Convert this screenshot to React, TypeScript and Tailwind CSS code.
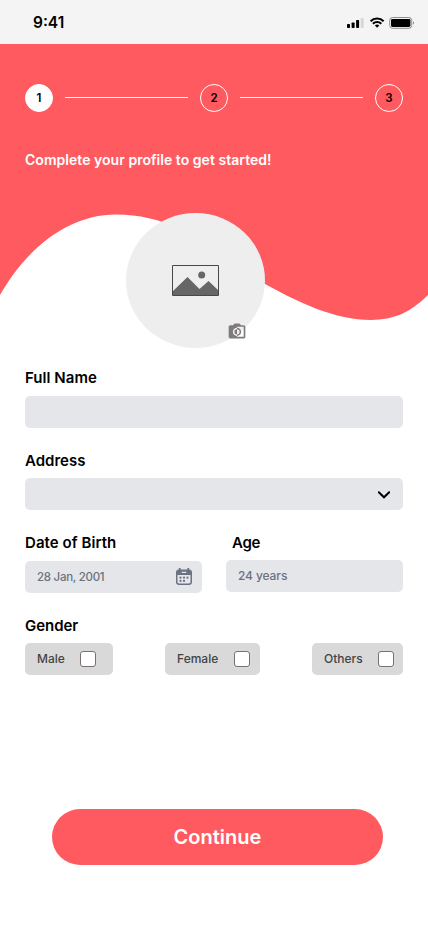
import React from "react";

const labelClass = "block h-5 text-[15px] leading-5 font-semibold text-black whitespace-nowrap";

function StatusBar() {
  return (
    <div className="flex h-11 items-center justify-between bg-[#f4f4f4] pr-[13px] pl-[33px]">
      <span className="mt-0.5 text-[15.5px] leading-5 font-semibold text-black">9:41</span>
      <svg width="68" height="14" viewBox="0 0 68 14" className="mt-0.5">
        <rect x="0" y="8" width="3" height="4" rx=".7" />
        <rect x="4.6" y="6.5" width="3" height="5.5" rx=".7" />
        <rect x="9.1" y="4" width="3" height="8" rx=".7" />
        <rect x="13.7" y="2" width="3" height="10" rx=".7" fill="#d7d7d7" />
        <g fill="none" stroke="#000" strokeWidth="2.1">
          <path d="M23.6 5.2a9.2 9.2 0 0 1 13 0" />
          <path d="M25.9 7.8a5.9 5.9 0 0 1 8.4 0" />
        </g>
        <path d="M27.9 9.6a3.3 3.3 0 0 1 4.4 0L30.1 11.8z" />
        <rect x="42.7" y="1.5" width="22" height="10.8" rx="2.8" fill="none" stroke="#8e8e8e" />
        <rect x="44" y="2.9" width="19.4" height="8" rx="1.3" />
        <path d="M66 5.2c1.4.6 1.4 2.8 0 3.4z" fill="#8e8e8e" />
      </svg>
    </div>
  );
}

function Step({ n, active = false }: { n: number; active?: boolean }) {
  return (
    <span
      className={`flex size-7 items-center justify-center rounded-full border border-white text-[11.5px] leading-4 font-semibold text-black ${
        active ? "bg-white" : ""
      }`}
    >
      {n}
    </span>
  );
}

function Steps() {
  return (
    <div className="flex items-center justify-between">
      <Step n={1} active />
      <span className="-mt-px h-px w-[123px] bg-white" />
      <Step n={2} />
      <span className="-mt-px h-px w-[123px] bg-white" />
      <Step n={3} />
    </div>
  );
}

function Wave() {
  return (
    <svg className="absolute top-0 left-0" width="428" height="277" viewBox="0 44 428 277">
      <path
        d="M0 44H428V295C411 312 394 320 371 320C335 320 300 303 265 284C232 266 188 214.500 116 214.500C70 214.500 28 246 0 295Z"
        fill="#ff5a60"
      />
    </svg>
  );
}

function Avatar() {
  return (
    <div className="relative ml-[101px] flex h-[135px] w-[139px] items-center justify-center rounded-[50%] bg-[#eeeeee]">
      <svg width="47" height="31" viewBox="0 0 47 31">
        <path d="M1 26 15.5 12 27.5 24 36.5 16 46 25V30.500H1z" fill="#666" />
        <circle cx="29.700" cy="10" r="3.500" fill="#666" />
        <path d="M.5.500h46v30H.5z" fill="none" stroke="#484848" />
      </svg>
      <svg className="absolute top-[107.5px] left-[101px]" width="20" height="20" viewBox="0 0 24 24" fill="#817a7a">
        <path d="M20 5h-3.200L15 3H9L7.200 5H4c-1.100 0-2 .9-2 2v12c0 1.100.9 2 2 2h16c1.100 0 2-.9 2-2V7c0-1.100-.9-2-2-2zm0 14h-8v-1c-2.800 0-5-2.200-5-5s2.200-5 5-5V7h8v12zm-3-6c0-2.800-2.200-5-5-5v1.800c1.800 0 3.200 1.400 3.200 3.200s-1.400 3.200-3.200 3.200V18c2.800 0 5-2.200 5-5zm-8.200 0c0 1.800 1.400 3.200 3.200 3.200V9.800c-1.800 0-3.200 1.400-3.200 3.200z" />
      </svg>
    </div>
  );
}

function CalendarIcon() {
  return (
    <svg width="16" height="17" viewBox="0 0 16 17" className="-mt-px">
      <path
        fillRule="evenodd"
        fill="#6b7280"
        d="M2.800 0h1.800v1.500h6.800V0h1.800v1.500C15 1.500 16 2.700 16 4.300V14c0 1.800-1.100 3-3 3H3c-1.900 0-3-1.200-3-3V4.300C0 2.700 1 1.500 2.800 1.500zM5.800 3.700v1.300h4.400V3.700zM1.500 7v6.800c0 1.100.6 1.700 1.700 1.700h9.600c1.100 0 1.700-.6 1.700-1.700V7z"
      />
      <g fill="#6b7280">
        <circle cx="4.500" cy="9.700" r="1.100" />
        <circle cx="8" cy="9.700" r="1.100" />
        <circle cx="11.500" cy="9.700" r="1.100" />
        <circle cx="4.500" cy="12.900" r="1.100" />
        <circle cx="8" cy="12.900" r="1.100" />
      </g>
    </svg>
  );
}

function GenderOption({ label, width, text }: { label: string; width: string; text: string }) {
  return (
    <label className={`flex h-8 items-center rounded-[5px] bg-[#d9d9d9] pl-3 ${width}`}>
      <span className={`text-xs leading-4 font-medium whitespace-nowrap text-[#444444] ${text}`}>{label}</span>
      <input type="checkbox" className="size-4 appearance-none rounded-[3px] border border-[#777171] bg-white" />
    </label>
  );
}

export default function App() {
  return (
    <div className="flex h-[926px] w-[428px] flex-col overflow-hidden bg-white font-['Inter',sans-serif]">
      <StatusBar />
      <main className="relative flex flex-1 flex-col px-[25px] pt-10">
        <Wave />
        <div className="relative flex flex-col">
          <Steps />
          <h1 className="mt-[38px] h-5 text-sm leading-5 font-semibold tracking-[0.035px] whitespace-nowrap text-white">
            Complete your profile to get started!
          </h1>
          <div className="mt-[43px]">
            <Avatar />
          </div>
          <div className="mt-5">
            <span className={`${labelClass} tracking-[0.04px]`}>Full Name</span>
            <div className="mt-2 h-8 rounded-[5px] bg-[#e5e6ea]" />
          </div>
          <div className="mt-[23px]">
            <span className={labelClass}>Address</span>
            <div className="mt-[7px] flex h-8 items-center justify-end rounded-[5px] bg-[#e5e6ea] pr-[13px]">
              <svg width="12" height="8" viewBox="0 0 12 8" fill="none" stroke="#000" strokeWidth="2" className="mt-px">
                <path d="M.8 1.200 6 6.300 11.200 1.200" strokeLinecap="round" />
              </svg>
            </div>
          </div>
          <div className="mt-[23px] flex justify-between">
            <div className="w-[177px]">
              <span className={`${labelClass} tracking-[0.06px]`}>Date of Birth</span>
              <div className="mt-2 flex h-8 items-center justify-between rounded-[5px] bg-[#e5e6ea] pr-2.5 pl-3">
                <span className="text-[11.5px] leading-4 font-medium tracking-[-0.27px] text-[#6b7280]">28 Jan, 2001</span>
                <CalendarIcon />
              </div>
            </div>
            <div className="w-[177px]">
              <span className={`${labelClass} pl-1.5 tracking-[-0.3px]`}>Age</span>
              <div className="mt-[7px] flex h-8 items-center rounded-[5px] bg-[#e5e6ea] pl-3">
                <span className="text-xs leading-4 font-medium tracking-[-0.1px] text-[#6b7280]">24 years</span>
              </div>
            </div>
          </div>
          <div className="mt-[23px]">
            <span className={`${labelClass} tracking-[-0.05px]`}>Gender</span>
            <div className="mt-[7px] flex justify-between">
              <GenderOption label="Male" width="w-[88px]" text="w-[43px]" />
              <GenderOption label="Female" width="w-[95px]" text="w-[57px]" />
              <GenderOption label="Others" width="w-[91px]" text="w-[54px]" />
            </div>
          </div>
          <button className="mt-[134px] ml-[27px] h-14 w-[331px] rounded-full bg-[#ff5a60] text-xl leading-7 font-semibold text-white">
            Continue
          </button>
        </div>
      </main>
    </div>
  );
}
